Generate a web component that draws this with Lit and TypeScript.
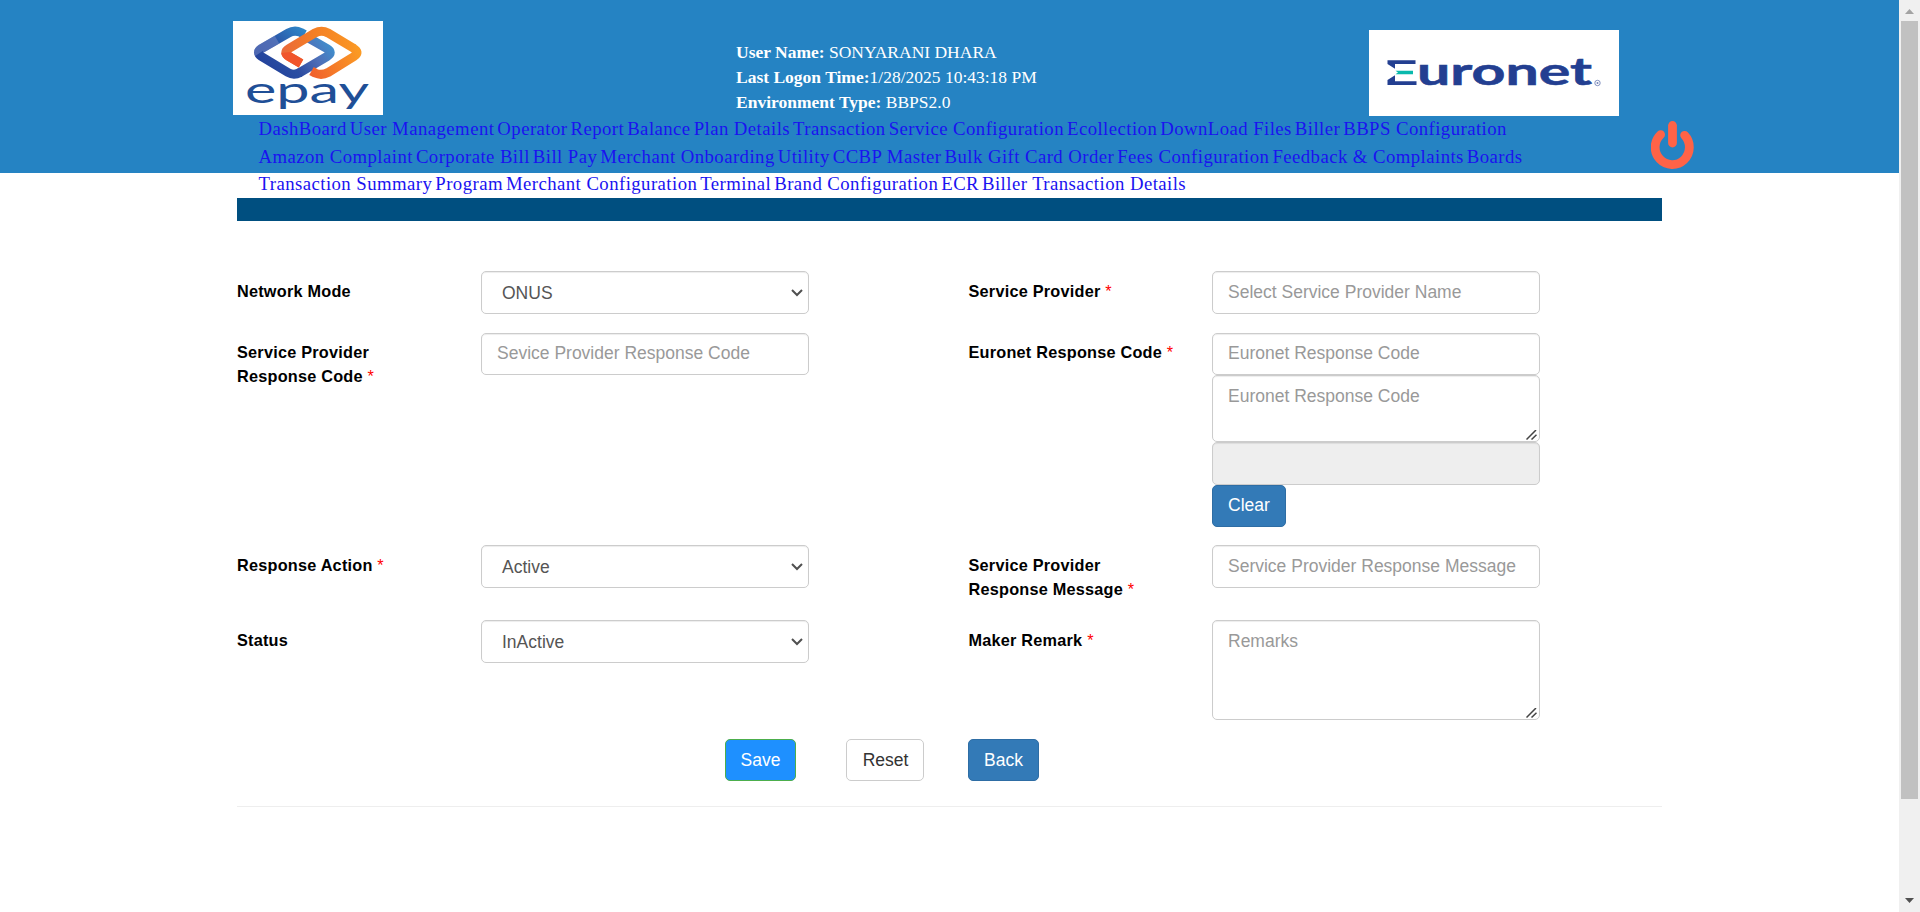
import { LitElement, html, css, svg } from "lit";
import { customElement, property } from "lit/decorators.js";

const NAV_LINES: string[][] = [
  ["DashBoard", "User Management", "Operator", "Report", "Balance", "Plan Details", "Transaction", "Service Configuration", "Ecollection", "DownLoad Files", "Biller", "BBPS Configuration"],
  ["Amazon Complaint", "Corporate Bill", "Bill Pay", "Merchant Onboarding", "Utility", "CCBP Master", "Bulk Gift Card Order", "Fees Configuration", "Feedback & Complaints", "Boards"],
  ["Transaction Summary", "Program", "Merchant Configuration", "Terminal", "Brand Configuration", "ECR", "Biller Transaction Details"],
];

@customElement("epay-logo")
class EpayLogo extends LitElement {
  static styles = css`
    :host { display: block; width: 150px; height: 94px; background: #fff; }
    svg { display: block; }
    text { font-family: "Lato", "Liberation Sans", sans-serif; }
  `;
  render() {
    return html`<svg width="150" height="94" viewBox="0 0 150 94" role="img" aria-label="epay">
      <defs>
        <linearGradient id="b" gradientUnits="userSpaceOnUse" x1="30" y1="50" x2="70" y2="8"><stop offset="0" stop-color="#22409a" /><stop offset=".45" stop-color="#2a4fa3" /><stop offset="1" stop-color="#2e86c8" /></linearGradient>
        <linearGradient id="b2" gradientUnits="userSpaceOnUse" x1="60" y1="54" x2="98" y2="24"><stop offset="0" stop-color="#23429b" /><stop offset=".6" stop-color="#4f6fb8" /><stop offset="1" stop-color="#3f8fcd" /></linearGradient>
        <linearGradient id="o" gradientUnits="userSpaceOnUse" x1="50" y1="30" x2="128" y2="30"><stop offset="0" stop-color="#ea6a3a" /><stop offset=".4" stop-color="#f47f25" /><stop offset="1" stop-color="#fb9a24" /></linearGradient>
        <linearGradient id="o2" gradientUnits="userSpaceOnUse" x1="78" y1="54" x2="126" y2="32"><stop offset="0" stop-color="#f0602c" /><stop offset="1" stop-color="#fb9a24" /></linearGradient>
      </defs>
      ${svg`
        <g fill="none" stroke-width="9">
          <path d="M71.500 13.500 L68 11.500 Q61.500 8.500 55.500 12 L28.500 27.500 Q22.500 31.500 28.500 35.500 L55 51.500 Q61 55 67 51.500" stroke="url(#b)" />
          <path d="M66 52 L94 35.500 Q100.500 31.500 94 27.500 L75.500 17" stroke="url(#b2)" />
          <path d="M44 18.600 L28.500 27.500 Q24.500 30.300 26 32.500" stroke="#8193cb" opacity=".45" />
          <path d="M68 42.500 L56 35.500 Q49.500 31.500 56 27.500 L82 12 Q88.500 8.500 95 12 L121 27.500" stroke="url(#o)" />
          <path d="M120 27 Q127.500 31.500 121 35.500 L95 51.500 Q88.500 55 82 52 L78.500 50" stroke="url(#o2)" />
          <path d="M68 42.500 L56 35.500 Q53 33.700 52.800 31.500" stroke="#f0552c" />
        </g>`}
      <text x="12" y="81.500" font-size="36" textLength="124" lengthAdjust="spacingAndGlyphs" fill="#1f4f97">epay</text>
    </svg>`;
  }
}

@customElement("euronet-logo")
class EuronetLogo extends LitElement {
  static styles = css`
    :host { display: block; width: 250px; height: 86px; background: #fff; }
    svg { display: block; }
    text { font-family: "Lato", "Liberation Sans", sans-serif; font-weight: 700; }
  `;
  render() {
    return html`<svg width="250" height="86" viewBox="0 0 250 86" role="img" aria-label="Euronet">
      <text x="15" y="55" font-size="37.500" textLength="208" lengthAdjust="spacingAndGlyphs" fill="#233f91" stroke="#233f91" stroke-width=".5">Euronet</text>
      ${svg`
        <rect x="13" y="25" width="35" height="32" fill="#fff" />
        <path d="M18.500 30.300 H46.500 V34 H26 V38.800 L18.500 34Z M18.500 55 H47.500 V51.300 H26 V45.300 L18.500 50Z" fill="#233f91" />
        <path d="M26.500 40.700 H44 V44.200 H26.500 L29 42.500Z" fill="#09b9ad" />
        <circle cx="228.500" cy="53" r="2.700" fill="none" stroke="#7384b8" stroke-width=".9" />
        <circle cx="228.500" cy="53" r="1" fill="#7384b8" />`}
    </svg>`;
  }
}

@customElement("power-icon")
class PowerIcon extends LitElement {
  static styles = css`
    :host { display: block; width: 43px; height: 48px; }
    svg { display: block; }
  `;
  render() {
    return html`<svg width="43" height="48" viewBox="0 0 43 48" fill="none" stroke="#ff6347" stroke-width="8.800" stroke-linecap="round">
      <path d="M21.500 4.500 V22" />
      <path d="M9.600 13.600 A17.100 17.300 0 1 0 33.600 14.300" />
    </svg>`;
  }
}

@customElement("form-select")
class FormSelect extends LitElement {
  @property() value = "";
  static styles = css`
    :host {
      display: flex; align-items: center; justify-content: space-between; box-sizing: border-box;
      width: 328px; height: 43px; padding: 1px 5px 0 20px;
      border: 1px solid #ccc; border-radius: 5px; background: #fff; color: #555;
      box-shadow: inset 0 1px 1px rgba(0, 0, 0, 0.075);
      font: 17.5px/25px "Liberation Sans", Arial, sans-serif;
    }
  `;
  render() {
    return html`<span>${this.value}</span>
      <svg width="12" height="8" viewBox="0 0 12 8" fill="none" stroke="#505050" stroke-width="2"><path d="M1 1 L6 6 L11 1" /></svg>`;
  }
}

@customElement("form-textarea")
class FormTextarea extends LitElement {
  @property() placeholder = "";
  static styles = css`
    :host { display: block; position: relative; width: 328px; }
    textarea {
      display: block; box-sizing: border-box; width: 100%; height: 100%; margin: 0; padding: 7.5px 15px; resize: none;
      border: 1px solid #ccc; border-radius: 5px; background: #fff; color: #555;
      box-shadow: inset 0 1px 1px rgba(0, 0, 0, 0.075);
      font: 17.5px/25px "Liberation Sans", Arial, sans-serif;
    }
    textarea::placeholder { color: #999; opacity: 1; }
    svg { position: absolute; right: 3px; bottom: 2px; }
  `;
  render() {
    return html`<textarea placeholder=${this.placeholder}></textarea>
      <svg width="11" height="10" viewBox="0 0 11 10" fill="none" stroke="#444" stroke-width="1.500"><path d="M.5 9.500 L10 0 M5.500 9.500 L10.500 4.800" /></svg>`;
  }
}

@customElement("scroll-bar")
class ScrollBar extends LitElement {
  static styles = css`
    :host { display: flex; flex-direction: column; align-items: center; width: 21px; height: 912px; background: #f0f0f0; }
    .arrow { height: 21px; flex: none; display: block; }
    .track { flex: 1; }
    .thumb { width: 17px; height: 778px; background: #c1c1c1; }
  `;
  render() {
    return html`<svg class="arrow" width="21" height="21"><path d="M6 14 H15 L10.500 9Z" fill="#a3a3a3" /></svg>
      <div class="track"><div class="thumb"></div></div>
      <svg class="arrow" width="21" height="21"><path d="M6 7 H15 L10.500 12Z" fill="#505050" /></svg>`;
  }
}

@customElement("app-root")
class AppRoot extends LitElement {
  static styles = css`
    :host { display: flex; width: 1920px; height: 912px; overflow: hidden; background: #fff; }
    .page { width: 1899px; height: 912px; overflow: hidden; font-family: "Liberation Sans", Arial, sans-serif; }
    header { height: 173px; background: #2583c3; font-family: "Liberation Serif", "Times New Roman", serif; }
    .brand { display: flex; align-items: flex-start; height: 115px; padding: 0 280px 0 233px; box-sizing: border-box; }
    .brand epay-logo { margin-top: 21px; }
    .brand euronet-logo { margin: 30px 0 0 auto; }
    .who { margin: 40px 0 0 353px; color: #fff; font-size: 17.5px; line-height: 25px; white-space: pre; }
    .menu { display: flex; align-items: flex-start; padding-left: 258.5px; }
    nav { width: 1392.5px; }
    .line { display: flex; gap: 3px; height: 27.5px; line-height: 27.5px; font-size: 18.75px; letter-spacing: 0.438px; white-space: nowrap; }
    .line a { color: #1a12f0; }
    .menu power-icon { margin-top: 6px; }
    main { padding: 25px 237px 0; }
    .bar { height: 23px; background: #004f80; }
    .form { display: grid; grid-template-columns: 244px 487px 244px 328px; grid-template-rows: 62px 212px 75px 119px; margin-top: 50px; }
    label { display: block; padding-top: 8px; color: #000; font-size: 16.25px; line-height: 24px; font-weight: 700; letter-spacing: 0.23px; }
    .second { padding-left: 0.5px; }
    .raised { padding-top: 7px; }
    .req { color: red; font-weight: 400; }
    .field {
      display: block; box-sizing: border-box; width: 328px; height: 42px; margin: 0; padding: 6.5px 15px 7.5px;
      border: 1px solid #ccc; border-radius: 5px; background: #fff; color: #555;
      box-shadow: inset 0 1px 1px rgba(0, 0, 0, 0.075);
      font: 17.5px/25px "Liberation Sans", Arial, sans-serif;
    }
    .field::placeholder { color: #999; opacity: 1; }
    .field:disabled { background: #eee; }
    .h43 { height: 43px; }
    .short { height: 67px; }
    .tall { height: 100px; }
    .btn {
      display: inline-block; box-sizing: border-box; height: 42px; padding: 0; border: 1px solid #2e6da4; border-radius: 5px;
      background: #337ab7; color: #fff; text-align: center; font: 17.5px/25px "Liberation Sans", Arial, sans-serif;
    }
    .clear { width: 74px; display: block; padding-bottom: 1px; }
    .actions { display: flex; padding-left: 488px; }
    .save { width: 71px; background: #1e90ff; border-color: #4cae4c; }
    .reset { width: 78px; margin-left: 50px; padding-left: 1px; background: #fff; border-color: #ccc; color: #333; }
    .back { width: 71px; margin-left: 44px; }
    .rule { height: 1px; margin-top: 25px; background: #eee; }
  `;
  render() {
    const req = html`<span class="req">*</span>`;
    return html`
      <div class="page">
        <header>
          <div class="brand">
            <epay-logo></epay-logo>
            <div class="who"><div><b>User Name:</b> SONYARANI DHARA</div><div><b>Last Logon Time:</b>1/28/2025 10:43:18 PM</div><div><b>Environment Type:</b> BBPS2.0</div></div>
            <euronet-logo></euronet-logo>
          </div>
          <div class="menu">
            <nav>${NAV_LINES.map((l) => html`<div class="line">${l.map((t) => html`<a>${t}</a>`)}</div>`)}</nav>
            <power-icon></power-icon>
          </div>
        </header>
        <main>
          <div class="bar"></div>
          <div class="form">
            <label>Network Mode</label>
            <div><form-select value="ONUS"></form-select></div>
            <label class="second">Service Provider ${req}</label>
            <div><input class="field h43" placeholder="Select Service Provider Name" /></div>

            <label class="raised">Service Provider<br />Response Code ${req}</label>
            <div><input class="field" placeholder="Sevice Provider Response Code" /></div>
            <label class="raised second">Euronet Response Code ${req}</label>
            <div>
              <input class="field" placeholder="Euronet Response Code" />
              <form-textarea class="short" placeholder="Euronet Response Code"></form-textarea>
              <input class="field h43" disabled />
              <button class="btn clear">Clear</button>
            </div>

            <label>Response Action ${req}</label>
            <div><form-select value="Active"></form-select></div>
            <label class="second">Service Provider<br />Response Message ${req}</label>
            <div><input class="field h43" placeholder="Service Provider Response Message" /></div>

            <label>Status</label>
            <div><form-select value="InActive"></form-select></div>
            <label class="second">Maker Remark ${req}</label>
            <div><form-textarea class="tall" placeholder="Remarks"></form-textarea></div>
          </div>
          <div class="actions">
            <button class="btn save">Save</button>
            <button class="btn reset">Reset</button>
            <button class="btn back">Back</button>
          </div>
          <div class="rule"></div>
        </main>
      </div>
      <scroll-bar></scroll-bar>
    `;
  }
}
